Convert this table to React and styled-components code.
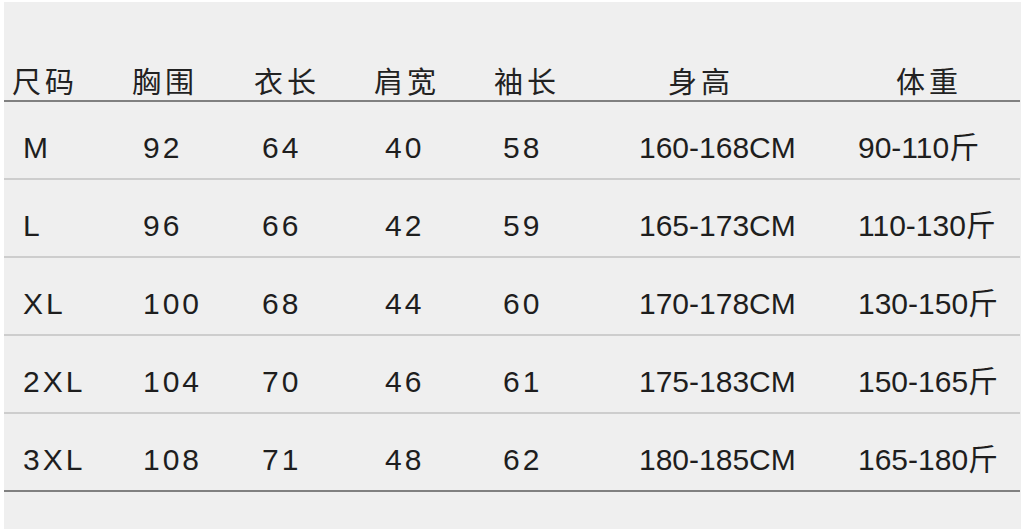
import React from "react";
import styled, { createGlobalStyle } from "styled-components";

const GlobalStyle = createGlobalStyle`
  html, body {
    margin: 0;
    padding: 0;
    background: #ffffff;
  }
`;

const Panel = styled.div`
  margin: 2px 3px 0 4px;
  height: 527px;
  background: #efefef;
  overflow: hidden;
`;

const Grid = styled.div`
  display: grid;
  grid-template-columns: 121px 120px 120px 120px 135px 220px 184px;
  margin-left: -4px;
`;

const HeadCell = styled.div`
  height: 100px;
  box-sizing: border-box;
  padding: 58px 0 0 ${(p) => p.$pad}px;
  border-bottom: 2px solid #808080;
  font-family: "Noto Sans CJK SC", "Noto Sans", sans-serif;
  font-size: 29px;
  line-height: 40px;
  letter-spacing: 4px;
  color: #222222;
  white-space: nowrap;
`;

const DataCell = styled.div`
  height: 78px;
  box-sizing: border-box;
  padding: 16px 0 0 ${(p) => p.$pad}px;
  display: flex;
  align-items: center;
  border-bottom: 2px solid ${(p) => (p.$last ? "#808080" : "#cdcdcd")};
  font-family: "Liberation Sans", Arial, "Noto Sans CJK SC", sans-serif;
  font-size: 30px;
  line-height: 30px;
  letter-spacing: ${(p) => (p.$tight ? 0 : 3)}px;
  color: #1e1e1e;
  white-space: nowrap;
`;

const columns = [
  { title: "尺码", head: 12, data: 23 },
  { title: "胸围", head: 11, data: 22 },
  { title: "衣长", head: 13, data: 21 },
  { title: "肩宽", head: 13, data: 24 },
  { title: "袖长", head: 13, data: 22 },
  { title: "身高", head: 52, data: 23, tight: true },
  { title: "体重", head: 60, data: 22, tight: true },
];

const rows = [
  ["M", "92", "64", "40", "58", "160-168CM", "90-110斤"],
  ["L", "96", "66", "42", "59", "165-173CM", "110-130斤"],
  ["XL", "100", "68", "44", "60", "170-178CM", "130-150斤"],
  ["2XL", "104", "70", "46", "61", "175-183CM", "150-165斤"],
  ["3XL", "108", "71", "48", "62", "180-185CM", "165-180斤"],
];

const App = () => {
  return (
    <>
      <GlobalStyle />
      <Panel>
        <Grid>
          {columns.map((col) => (
            <HeadCell key={col.title} $pad={col.head}>
              {col.title}
            </HeadCell>
          ))}
          {rows.map((row, r) =>
            row.map((value, c) => (
              <DataCell
                key={`${r}-${c}`}
                $pad={columns[c].data}
                $tight={columns[c].tight}
                $last={r === rows.length - 1}
              >
                {value}
              </DataCell>
            ))
          )}
        </Grid>
      </Panel>
    </>
  );
};

export default App;
